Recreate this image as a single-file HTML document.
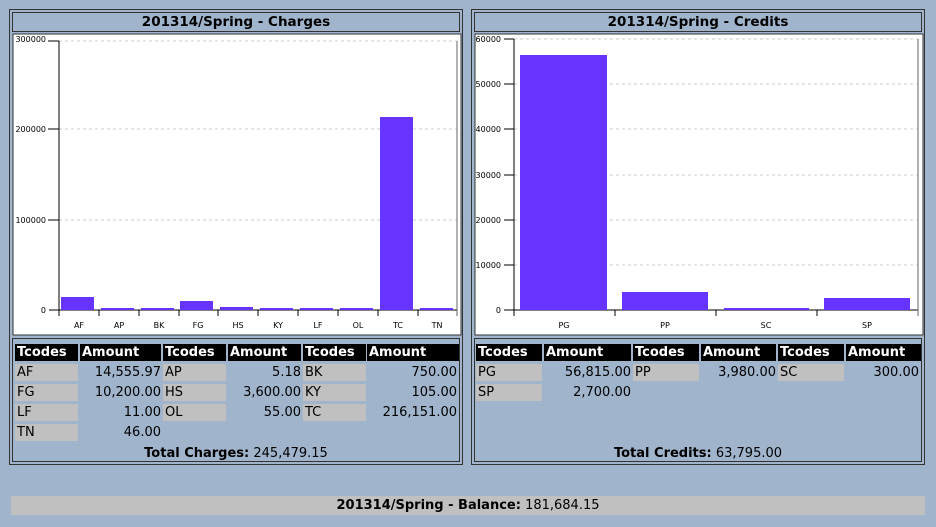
<!DOCTYPE html>
<html><head><meta charset="utf-8"><style>
body{margin:0;width:936px;height:527px;background:#a0b4cc;position:relative;overflow:hidden;font-family:"DejaVu Sans","Liberation Sans",sans-serif;color:#000}
.panel{position:absolute;top:9px;width:454px;height:456px;border:1px solid #333;box-sizing:border-box}
.title{position:absolute;left:2px;right:2px;top:2px;height:20px;border:1px solid #333;box-sizing:border-box;text-align:center;font-weight:bold;font-size:13.5px;line-height:19px}
.tbl{position:absolute;left:2px;right:2px;top:328px;bottom:2px;border:1px solid #333;box-sizing:border-box}
.c{position:absolute;height:17px;font-size:13px;line-height:17px;box-sizing:border-box;padding:0 2px;white-space:nowrap}
.h{background:#000;color:#fff;font-weight:bold}
.g{background:#c0c0c0}
.r{text-align:right}
.tot{position:absolute;left:0;right:0;font-size:13px;text-align:center}
</style></head><body>
<div class="panel" style="left:9px"><div class="title">201314/Spring - Charges</div><div class="tbl"></div></div>
<div class="panel" style="left:471px"><div class="title">201314/Spring - Credits</div><div class="tbl"></div></div>
<svg width="936" height="527" style="position:absolute;left:0;top:0" font-family="DejaVu Sans,Liberation Sans,sans-serif" font-size="8">
<rect x="13" y="34" width="448" height="301" fill="#fff" stroke="#333"/>
<rect x="475" y="34" width="448" height="301" fill="#fff" stroke="#333"/>
<g stroke="#ccc" stroke-dasharray="3,3"><line x1="59" y1="41" x2="457" y2="41"/><line x1="59" y1="129" x2="457" y2="129"/><line x1="59" y1="220" x2="457" y2="220"/>
<line x1="514" y1="39" x2="918" y2="39"/><line x1="514" y1="84" x2="918" y2="84"/><line x1="514" y1="129" x2="918" y2="129"/><line x1="514" y1="175" x2="918" y2="175"/><line x1="514" y1="220" x2="918" y2="220"/><line x1="514" y1="265" x2="918" y2="265"/></g>
<g stroke="#000"><line x1="59" y1="41" x2="59" y2="316"/><line x1="49" y1="310" x2="457" y2="310"/><line x1="457" y1="41" x2="457" y2="316" stroke="#666"/>
<line x1="48" y1="41" x2="59" y2="41"/><line x1="48" y1="129" x2="59" y2="129"/><line x1="48" y1="220" x2="59" y2="220"/>
<line x1="514" y1="39" x2="514" y2="316"/><line x1="504" y1="310" x2="918" y2="310"/><line x1="918" y1="39" x2="918" y2="316" stroke="#666"/>
<line x1="504" y1="39" x2="514" y2="39"/><line x1="504" y1="84" x2="514" y2="84"/><line x1="504" y1="129" x2="514" y2="129"/><line x1="504" y1="175" x2="514" y2="175"/><line x1="504" y1="220" x2="514" y2="220"/><line x1="504" y1="265" x2="514" y2="265"/>
<path d="M99 310v6M139 310v6M179 310v6M218 310v6M258 310v6M298 310v6M338 310v6M378 310v6M418 310v6M615 310v6M716 310v6M817 310v6"/></g>
<g fill="#6633ff">
<rect x="61" y="297" width="33" height="13"/><rect x="101" y="308" width="33" height="2"/><rect x="141" y="308" width="33" height="2"/><rect x="180" y="301" width="33" height="9"/><rect x="220" y="307" width="33" height="3"/><rect x="260" y="308" width="33" height="2"/><rect x="300" y="308" width="33" height="2"/><rect x="340" y="308" width="33" height="2"/><rect x="380" y="117" width="33" height="193"/><rect x="420" y="308" width="33" height="2"/>
<rect x="520" y="55" width="87" height="255"/><rect x="622" y="292" width="86" height="18"/><rect x="724" y="308" width="85" height="2"/><rect x="824" y="298" width="86" height="12"/></g>
<g text-anchor="end"><text x="46" y="42">300000</text><text x="46" y="132">200000</text><text x="46" y="223">100000</text><text x="46" y="313">0</text>
<text x="501" y="42">60000</text><text x="501" y="87">50000</text><text x="501" y="132">40000</text><text x="501" y="178">30000</text><text x="501" y="223">20000</text><text x="501" y="268">10000</text><text x="501" y="313">0</text></g>
<g text-anchor="middle"><text x="79" y="328">AF</text><text x="119" y="328">AP</text><text x="159" y="328">BK</text><text x="198" y="328">FG</text><text x="238" y="328">HS</text><text x="278" y="328">KY</text><text x="318" y="328">LF</text><text x="358" y="328">OL</text><text x="398" y="328">TC</text><text x="437" y="328">TN</text>
<text x="564" y="328">PG</text><text x="665" y="328">PP</text><text x="766" y="328">SC</text><text x="867" y="328">SP</text></g>
</svg>
<div class="c h" style="left:15px;top:344px;width:63px">Tcodes</div><div class="c h" style="left:80px;top:344px;width:81px">Amount</div>
<div class="c h" style="left:163px;top:344px;width:63px">Tcodes</div><div class="c h" style="left:228px;top:344px;width:73px">Amount</div>
<div class="c h" style="left:303px;top:344px;width:63px">Tcodes</div><div class="c h" style="left:367px;top:344px;width:92px">Amount</div>
<div class="c g" style="left:15px;top:364px;width:63px">AF</div><div class="c r" style="left:80px;top:364px;width:83px">14,555.97</div>
<div class="c g" style="left:163px;top:364px;width:63px">AP</div><div class="c r" style="left:228px;top:364px;width:75px">5.18</div>
<div class="c g" style="left:303px;top:364px;width:63px">BK</div><div class="c r" style="left:367px;top:364px;width:92px">750.00</div>
<div class="c g" style="left:15px;top:384px;width:63px">FG</div><div class="c r" style="left:80px;top:384px;width:83px">10,200.00</div>
<div class="c g" style="left:163px;top:384px;width:63px">HS</div><div class="c r" style="left:228px;top:384px;width:75px">3,600.00</div>
<div class="c g" style="left:303px;top:384px;width:63px">KY</div><div class="c r" style="left:367px;top:384px;width:92px">105.00</div>
<div class="c g" style="left:15px;top:404px;width:63px">LF</div><div class="c r" style="left:80px;top:404px;width:83px">11.00</div>
<div class="c g" style="left:163px;top:404px;width:63px">OL</div><div class="c r" style="left:228px;top:404px;width:75px">55.00</div>
<div class="c g" style="left:303px;top:404px;width:63px">TC</div><div class="c r" style="left:367px;top:404px;width:92px">216,151.00</div>
<div class="c g" style="left:15px;top:424px;width:63px">TN</div><div class="c r" style="left:80px;top:424px;width:83px">46.00</div>
<div class="tot" style="left:9px;width:454px;top:446px"><b>Total Charges:</b> 245,479.15</div>
<div class="c h" style="left:476px;top:344px;width:66px">Tcodes</div><div class="c h" style="left:544px;top:344px;width:87px">Amount</div>
<div class="c h" style="left:633px;top:344px;width:66px">Tcodes</div><div class="c h" style="left:701px;top:344px;width:75px">Amount</div>
<div class="c h" style="left:778px;top:344px;width:66px">Tcodes</div><div class="c h" style="left:846px;top:344px;width:75px">Amount</div>
<div class="c g" style="left:476px;top:364px;width:66px">PG</div><div class="c r" style="left:544px;top:364px;width:89px">56,815.00</div>
<div class="c g" style="left:633px;top:364px;width:66px">PP</div><div class="c r" style="left:701px;top:364px;width:77px">3,980.00</div>
<div class="c g" style="left:778px;top:364px;width:66px">SC</div><div class="c r" style="left:846px;top:364px;width:75px">300.00</div>
<div class="c g" style="left:476px;top:384px;width:66px">SP</div><div class="c r" style="left:544px;top:384px;width:89px">2,700.00</div>
<div class="tot" style="left:471px;width:454px;top:446px"><b>Total Credits:</b> 63,795.00</div>
<div style="position:absolute;left:11px;top:496px;width:914px;height:19px;background:#c0c0c0;text-align:center;font-size:13px;line-height:20px"><b>201314/Spring - Balance:</b> 181,684.15</div>
</body></html>
